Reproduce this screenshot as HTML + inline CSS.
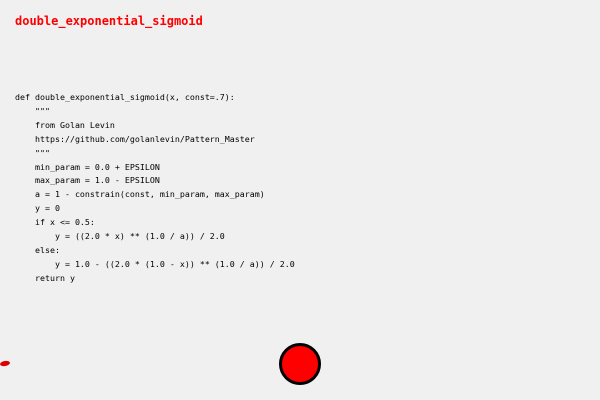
<!DOCTYPE html>
<html><head><meta charset="utf-8"><style>
html,body{margin:0;padding:0;background:#f0f0f0;width:600px;height:400px;overflow:hidden;position:relative}
.t{position:absolute;left:15px;top:14px;font:bold 12px "DejaVu Sans Mono",monospace;color:#ff0000;white-space:pre}
pre{position:absolute;left:15px;top:91px;margin:0;font:8.3px/13.9px "DejaVu Sans Mono",monospace;color:#000}
.c{position:absolute;left:279px;top:343px;width:36px;height:36px;border:3px solid #000;border-radius:50%;background:#ff0000}
.d{position:absolute;left:0;top:361px;width:10px;height:5px;border-radius:50%;background:#dd0000;transform:rotate(-10deg)}
</style></head><body>
<div class="t">double_exponential_sigmoid</div>
<pre>def double_exponential_sigmoid(x, const=.7):
    """
    from Golan Levin
    https://github.com/golanlevin/Pattern_Master
    """
    min_param = 0.0 + EPSILON
    max_param = 1.0 - EPSILON
    a = 1 - constrain(const, min_param, max_param)
    y = 0
    if x &lt;= 0.5:
        y = ((2.0 * x) ** (1.0 / a)) / 2.0
    else:
        y = 1.0 - ((2.0 * (1.0 - x)) ** (1.0 / a)) / 2.0
    return y</pre>
<div class="d"></div>
<div class="c"></div>
</body></html>
